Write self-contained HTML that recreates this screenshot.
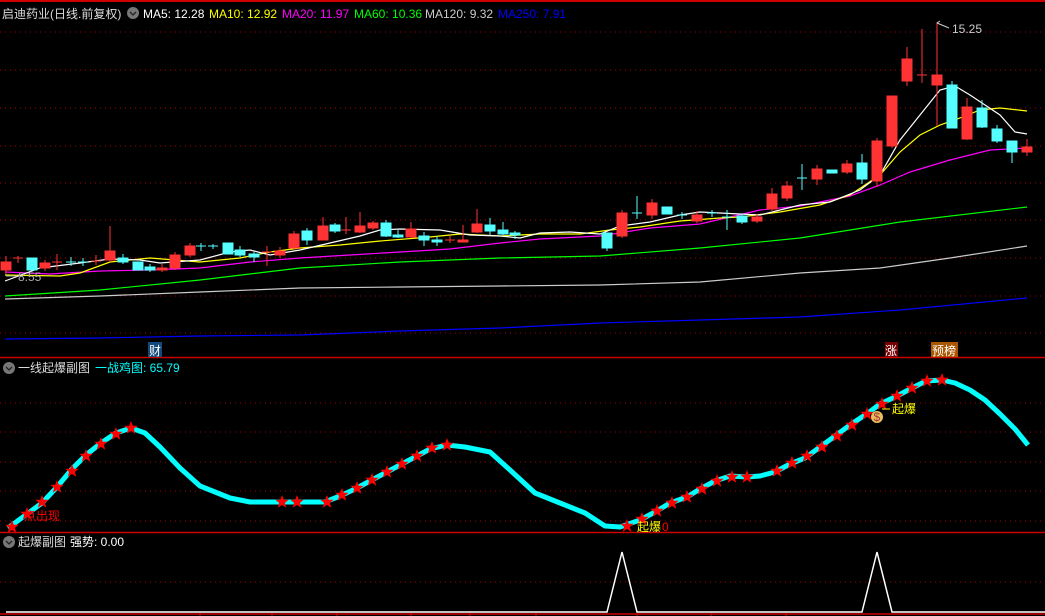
<!DOCTYPE html>
<html><head><meta charset="utf-8"><style>
html,body{margin:0;padding:0;background:#000;width:1045px;height:616px;overflow:hidden}
svg{display:block}
text{font-family:"Liberation Sans","Noto Sans CJK SC",sans-serif;font-size:12px}
</style></head><body>
<svg width="1045" height="616" viewBox="0 0 1045 616">
<defs>
<polygon id="st" points="0,-7 1.8,-2.3 6.7,-2.2 2.9,0.9 4.2,5.7 0,2.9 -4.2,5.7 -2.9,0.9 -6.7,-2.2 -1.8,-2.3" fill="#f00"/>
</defs>
<rect width="1045" height="616" fill="#000"/>
<line x1="0" y1="1" x2="1045" y2="1" stroke="#c00" stroke-width="2"/>
<g stroke="#a00" stroke-dasharray="1,4" stroke-width="1">
<line x1="0" y1="32" x2="1045" y2="32"/><line x1="0" y1="70" x2="1045" y2="70"/><line x1="0" y1="108" x2="1045" y2="108"/><line x1="0" y1="146" x2="1045" y2="146"/><line x1="0" y1="183" x2="1045" y2="183"/><line x1="0" y1="220" x2="1045" y2="220"/><line x1="0" y1="258" x2="1045" y2="258"/><line x1="0" y1="296" x2="1045" y2="296"/><line x1="0" y1="333" x2="1045" y2="333"/>
<line x1="0" y1="403" x2="1045" y2="403"/><line x1="0" y1="432" x2="1045" y2="432"/><line x1="0" y1="462" x2="1045" y2="462"/><line x1="0" y1="491" x2="1045" y2="491"/><line x1="0" y1="521" x2="1045" y2="521"/>
<line x1="0" y1="582" x2="1045" y2="582"/>
</g>
<line x1="0" y1="357.5" x2="1045" y2="357.5" stroke="#c00" stroke-width="1.5"/>
<line x1="0" y1="532.5" x2="1045" y2="532.5" stroke="#c00" stroke-width="1.5"/>
<line x1="0" y1="614" x2="1045" y2="614" stroke="#c00" stroke-width="1.5"/>
<g stroke="#c00"><line x1="200" y1="612" x2="200" y2="616"/><line x1="272" y1="612" x2="272" y2="616"/><line x1="337" y1="612" x2="337" y2="616"/><line x1="411" y1="612" x2="411" y2="616"/><line x1="470" y1="612" x2="470" y2="616"/><line x1="536" y1="612" x2="536" y2="616"/><line x1="637" y1="612" x2="637" y2="616"/><line x1="711" y1="612" x2="711" y2="616"/><line x1="786" y1="612" x2="786" y2="616"/></g>

<!-- MAs -->
<g fill="none" stroke-width="1.2">
<polyline stroke="#00f" points="5,339 100,338 200,336 300,335 400,331 500,328 600,323 700,320 800,317 900,310 1027,298"/>
<polyline stroke="#ccc" points="5,299 100,296 200,292 300,288 400,287 500,286 600,285 700,282 800,273 880,268 950,258 1027,246"/>
<polyline stroke="#0f0" points="5,296 100,290 200,280 300,268 400,262 500,258 600,256 700,248 800,238 900,222 1027,207"/>
<polyline stroke="#f0f" points="5,272 50,274 100,271 150,270 200,268 250,262 300,258 350,255 400,252 450,249 500,243 540,239 600,236 650,228 700,224 760,210 800,206 850,196 880,185 910,172 950,160 990,150 1027,148"/>
<polyline stroke="#ff0" points="5,275 60,276 80,273 110,262 150,258 200,262 240,258 270,252 300,248 340,245 380,241 430,237 460,234 500,236 540,234 580,234 610,230 640,227 680,221 720,218 740,217 780,212 820,205 850,195 880,175 900,152 920,135 940,125 960,118 980,110 1000,108 1027,111"/>
<polyline stroke="#fff" points="5,281 40,268 80,263 110,259 140,260 160,263 200,260 230,252 250,250 270,255 300,250 330,243 360,236 380,230 400,229 440,230 470,235 500,236 520,238 540,233 570,232 600,234 620,226 650,222 680,215 700,212 740,214 760,215 780,210 800,205 830,202 860,190 880,175 900,140 920,115 940,90 955,86 970,95 985,105 1000,115 1015,132 1027,134"/>
</g>

<!-- candles -->
<g stroke-width="1">
<g fill="#f33" stroke="#f33">
<rect x="1" y="262" width="10" height="8"/><line x1="6" y1="256" x2="6" y2="274"/>
<line x1="13" y1="258" x2="23" y2="258"/><line x1="18" y1="256" x2="18" y2="263"/>
<rect x="40" y="263" width="10" height="5"/><line x1="45" y1="260" x2="45" y2="271"/>
<line x1="52" y1="262" x2="62" y2="262"/><line x1="57" y1="254" x2="57" y2="270"/>
<line x1="91" y1="261" x2="101" y2="261"/><line x1="96" y1="255" x2="96" y2="265"/>
<rect x="105" y="251" width="10" height="9"/><line x1="110" y1="226" x2="110" y2="262"/>
<rect x="157" y="268" width="10" height="2"/><line x1="162" y1="264" x2="162" y2="272"/>
<rect x="170" y="255" width="10" height="13"/><line x1="175" y1="252" x2="175" y2="270"/>
<rect x="185" y="246" width="10" height="9"/><line x1="190" y1="243" x2="190" y2="257"/>
<line x1="262" y1="252" x2="272" y2="252"/><line x1="267" y1="246" x2="267" y2="266"/>
<rect x="275" y="251" width="10" height="4"/><line x1="280" y1="247" x2="280" y2="258"/>
<rect x="289" y="234" width="10" height="14"/><line x1="294" y1="231" x2="294" y2="249"/>
<rect x="318" y="226" width="10" height="14"/><line x1="323" y1="217" x2="323" y2="240"/>
<line x1="341" y1="230" x2="351" y2="230"/><line x1="346" y1="217" x2="346" y2="234"/>
<rect x="355" y="226" width="10" height="6"/><line x1="360" y1="212" x2="360" y2="233"/>
<rect x="368" y="223" width="10" height="5"/><line x1="373" y1="221" x2="373" y2="230"/>
<rect x="406" y="229" width="10" height="8"/><line x1="411" y1="222" x2="411" y2="238"/>
<line x1="445" y1="240" x2="455" y2="240"/><line x1="450" y1="236" x2="450" y2="243"/>
<rect x="458" y="240" width="10" height="2"/><line x1="463" y1="225" x2="463" y2="242"/>
<rect x="472" y="224" width="10" height="8"/><line x1="477" y1="209" x2="477" y2="233"/>
<rect x="617" y="213" width="10" height="23"/><line x1="622" y1="210" x2="622" y2="238"/>
<rect x="647" y="203" width="10" height="12"/><line x1="652" y1="199" x2="652" y2="219"/>
<rect x="692" y="215" width="10" height="6"/><line x1="697" y1="211" x2="697" y2="223"/>
<rect x="752" y="217" width="10" height="4"/><line x1="757" y1="214" x2="757" y2="223"/>
<rect x="767" y="194" width="10" height="15"/><line x1="772" y1="188" x2="772" y2="212"/>
<rect x="782" y="186" width="10" height="12"/><line x1="787" y1="181" x2="787" y2="201"/>
<rect x="812" y="169" width="10" height="10"/><line x1="817" y1="165" x2="817" y2="185"/>
<rect x="842" y="164" width="10" height="8"/><line x1="847" y1="160" x2="847" y2="174"/>
<rect x="872" y="141" width="10" height="40"/><line x1="877" y1="138" x2="877" y2="187"/>
<rect x="887" y="96" width="10" height="50"/><line x1="892" y1="96" x2="892" y2="148"/>
<rect x="902" y="59" width="10" height="22"/><line x1="907" y1="47" x2="907" y2="86"/>
<line x1="917" y1="75" x2="927" y2="75"/><line x1="922" y1="29" x2="922" y2="83"/>
<rect x="932" y="75" width="10" height="10"/><line x1="937" y1="22" x2="937" y2="126"/>
<rect x="962" y="107" width="10" height="32"/><line x1="967" y1="98" x2="967" y2="140"/>
<rect x="1022" y="147" width="10" height="5"/><line x1="1027" y1="139" x2="1027" y2="156"/>
</g>
<g fill="#5ff" stroke="#5ff">
<rect x="27" y="258" width="10" height="12"/>
<line x1="66" y1="262" x2="76" y2="262"/><line x1="71" y1="257" x2="71" y2="266"/>
<line x1="78" y1="262" x2="88" y2="262"/><line x1="83" y1="258" x2="83" y2="266"/>
<rect x="118" y="258" width="10" height="4"/><line x1="123" y1="254" x2="123" y2="264"/>
<rect x="133" y="262" width="10" height="8"/>
<rect x="145" y="267" width="10" height="3"/><line x1="150" y1="264" x2="150" y2="272"/>
<line x1="196" y1="246" x2="206" y2="246"/><line x1="201" y1="243" x2="201" y2="251"/>
<line x1="208" y1="246" x2="218" y2="246"/><line x1="213" y1="244" x2="213" y2="249"/>
<rect x="223" y="243" width="10" height="11"/>
<rect x="235" y="250" width="10" height="5"/><line x1="240" y1="246" x2="240" y2="257"/>
<rect x="249" y="254" width="10" height="3"/><line x1="254" y1="252" x2="254" y2="262"/>
<rect x="302" y="231" width="10" height="9"/><line x1="307" y1="228" x2="307" y2="245"/>
<rect x="330" y="225" width="10" height="6"/><line x1="335" y1="223" x2="335" y2="233"/>
<rect x="381" y="223" width="10" height="13"/><line x1="386" y1="220" x2="386" y2="237"/>
<rect x="393" y="235" width="10" height="2"/><line x1="398" y1="230" x2="398" y2="238"/>
<rect x="419" y="236" width="10" height="4"/><line x1="424" y1="232" x2="424" y2="246"/>
<rect x="432" y="240" width="10" height="2"/><line x1="437" y1="236" x2="437" y2="246"/>
<rect x="485" y="225" width="10" height="6"/><line x1="490" y1="218" x2="490" y2="235"/>
<rect x="498" y="230" width="10" height="4"/><line x1="503" y1="222" x2="503" y2="235"/>
<rect x="510" y="233" width="10" height="2"/><line x1="515" y1="231" x2="515" y2="239"/>
<rect x="602" y="233" width="10" height="15"/><line x1="607" y1="233" x2="607" y2="251"/>
<line x1="632" y1="213" x2="642" y2="213"/><line x1="637" y1="196" x2="637" y2="219"/>
<rect x="662" y="207" width="10" height="7"/>
<line x1="677" y1="215" x2="687" y2="215"/><line x1="682" y1="212" x2="682" y2="219"/>
<line x1="707" y1="213" x2="717" y2="213"/><line x1="712" y1="210" x2="712" y2="217"/>
<line x1="722" y1="217" x2="732" y2="217"/><line x1="727" y1="210" x2="727" y2="230"/>
<rect x="737" y="216" width="10" height="6"/><line x1="742" y1="214" x2="742" y2="224"/>
<line x1="797" y1="178" x2="807" y2="178"/><line x1="802" y1="164" x2="802" y2="190"/>
<rect x="827" y="170" width="10" height="3"/>
<rect x="857" y="163" width="10" height="16"/><line x1="862" y1="154" x2="862" y2="184"/>
<rect x="947" y="85" width="10" height="43"/><line x1="952" y1="81" x2="952" y2="128"/>
<rect x="977" y="108" width="10" height="19"/><line x1="982" y1="100" x2="982" y2="128"/>
<rect x="992" y="129" width="10" height="12"/><line x1="997" y1="125" x2="997" y2="143"/>
<rect x="1007" y="141" width="10" height="11"/><line x1="1012" y1="141" x2="1012" y2="163"/>
</g>
</g>
<text x="18" y="281" fill="#aaa">8.55</text><line x1="6" y1="276" x2="17" y2="276" stroke="#aaa"/>
<text x="952" y="33" fill="#ccc">15.25</text><path d="M937 23 L940 21 M937 23 L949 28" stroke="#ccc" fill="none"/>

<!-- header -->
<text x="2" y="18" fill="#ddd" font-size="13">启迪药业(日线.前复权)</text>
<circle cx="133" cy="13" r="6" fill="#777"/><path d="M130 12 L133 15 L136 12" stroke="#222" fill="none" stroke-width="1.3"/>
<text x="143" y="18" fill="#fff">MA5: 12.28</text>
<text x="209" y="18" fill="#ff0">MA10: 12.92</text>
<text x="282" y="18" fill="#f0f">MA20: 11.97</text>
<text x="354" y="18" fill="#0f0">MA60: 10.36</text>
<text x="425" y="18" fill="#ccc">MA120: 9.32</text>
<text x="498" y="18" fill="#00f">MA250: 7.91</text>

<rect x="148" y="342" width="14" height="15" fill="#124a7a"/><text x="149" y="355" fill="#fff">财</text>
<rect x="885" y="342" width="13" height="15" fill="#700"/><text x="885" y="355" fill="#fff">涨</text>
<rect x="931" y="342" width="14" height="15" fill="#a50"/><rect x="945" y="342" width="13" height="15" fill="#a50"/><text x="932" y="355" fill="#fff">预榜</text>

<circle cx="9" cy="368" r="6" fill="#777"/><path d="M6 367 L9 370 L12 367" stroke="#222" fill="none" stroke-width="1.3"/>
<text x="18" y="372" fill="#ddd">一线起爆副图</text>
<text x="95" y="372" fill="#0ff">一战鸡图: 65.79</text>

<polyline fill="none" stroke="#0ff" stroke-width="5" stroke-linejoin="round" points="8,528 42,503 57,487 72,469 86,455 101,443 116,433 131,428 145,433 160,447 180,468 200,486 230,498 250,502 280,502 325,502 340,496 355,489 370,481 385,473 400,465 415,457 430,449 447,445 465,447 490,452 510,470 535,493 560,503 585,513 605,526 620,527 640,520 655,512 670,503 687,497 700,489 715,481 730,476 747,477 760,476 775,472 790,464 805,458 820,447 835,436 850,425 868,413 880,404 897,396 912,388 926,381 942,380 955,383 970,390 985,400 1000,414 1015,429 1028,445"/>
<g>
<use href="#st" x="12" y="527"/><use href="#st" x="27" y="514"/><use href="#st" x="42" y="502"/><use href="#st" x="57" y="487"/><use href="#st" x="72" y="471"/><use href="#st" x="86" y="456"/><use href="#st" x="101" y="444"/><use href="#st" x="116" y="434"/><use href="#st" x="131" y="428"/>
<use href="#st" x="282" y="502"/><use href="#st" x="297" y="502"/><use href="#st" x="327" y="502"/><use href="#st" x="342" y="495"/><use href="#st" x="357" y="488"/><use href="#st" x="372" y="480"/><use href="#st" x="387" y="472"/><use href="#st" x="402" y="464"/><use href="#st" x="417" y="456"/><use href="#st" x="432" y="448"/><use href="#st" x="447" y="445"/>
<use href="#st" x="627" y="526"/><use href="#st" x="642" y="519"/><use href="#st" x="657" y="511"/><use href="#st" x="672" y="503"/><use href="#st" x="687" y="497"/><use href="#st" x="702" y="489"/><use href="#st" x="717" y="481"/><use href="#st" x="732" y="477"/><use href="#st" x="747" y="477"/><use href="#st" x="777" y="471"/><use href="#st" x="792" y="463"/><use href="#st" x="807" y="456"/><use href="#st" x="822" y="447"/><use href="#st" x="837" y="436"/><use href="#st" x="852" y="425"/><use href="#st" x="867" y="414"/><use href="#st" x="882" y="404"/><use href="#st" x="897" y="396"/><use href="#st" x="912" y="388"/><use href="#st" x="927" y="381"/><use href="#st" x="942" y="380"/>
</g>
<text x="24" y="520" fill="#f00">点出现</text>
<text x="637" y="531" fill="#ff0">起爆</text><text x="662" y="531" fill="#f00" font-size="10">0</text>
<circle cx="877" cy="417" r="6" fill="#e8c060"/><text x="873.5" y="421" fill="#a33" font-size="9">$</text>
<line x1="882" y1="409" x2="890" y2="409" stroke="#ff0"/>
<text x="892" y="413" fill="#ff0">起爆</text>

<circle cx="9" cy="542" r="6" fill="#777"/><path d="M6 541 L9 544 L12 541" stroke="#222" fill="none" stroke-width="1.3"/>
<text x="18" y="546" fill="#ddd">起爆副图</text>
<text x="70" y="546" fill="#fff">强势: 0.00</text>
<polyline fill="none" stroke="#fff" stroke-width="1.5" points="6,612 607,612 622,552 637,612 862,612 877,552 892,612 1045,612"/>
</svg>
</body></html>
